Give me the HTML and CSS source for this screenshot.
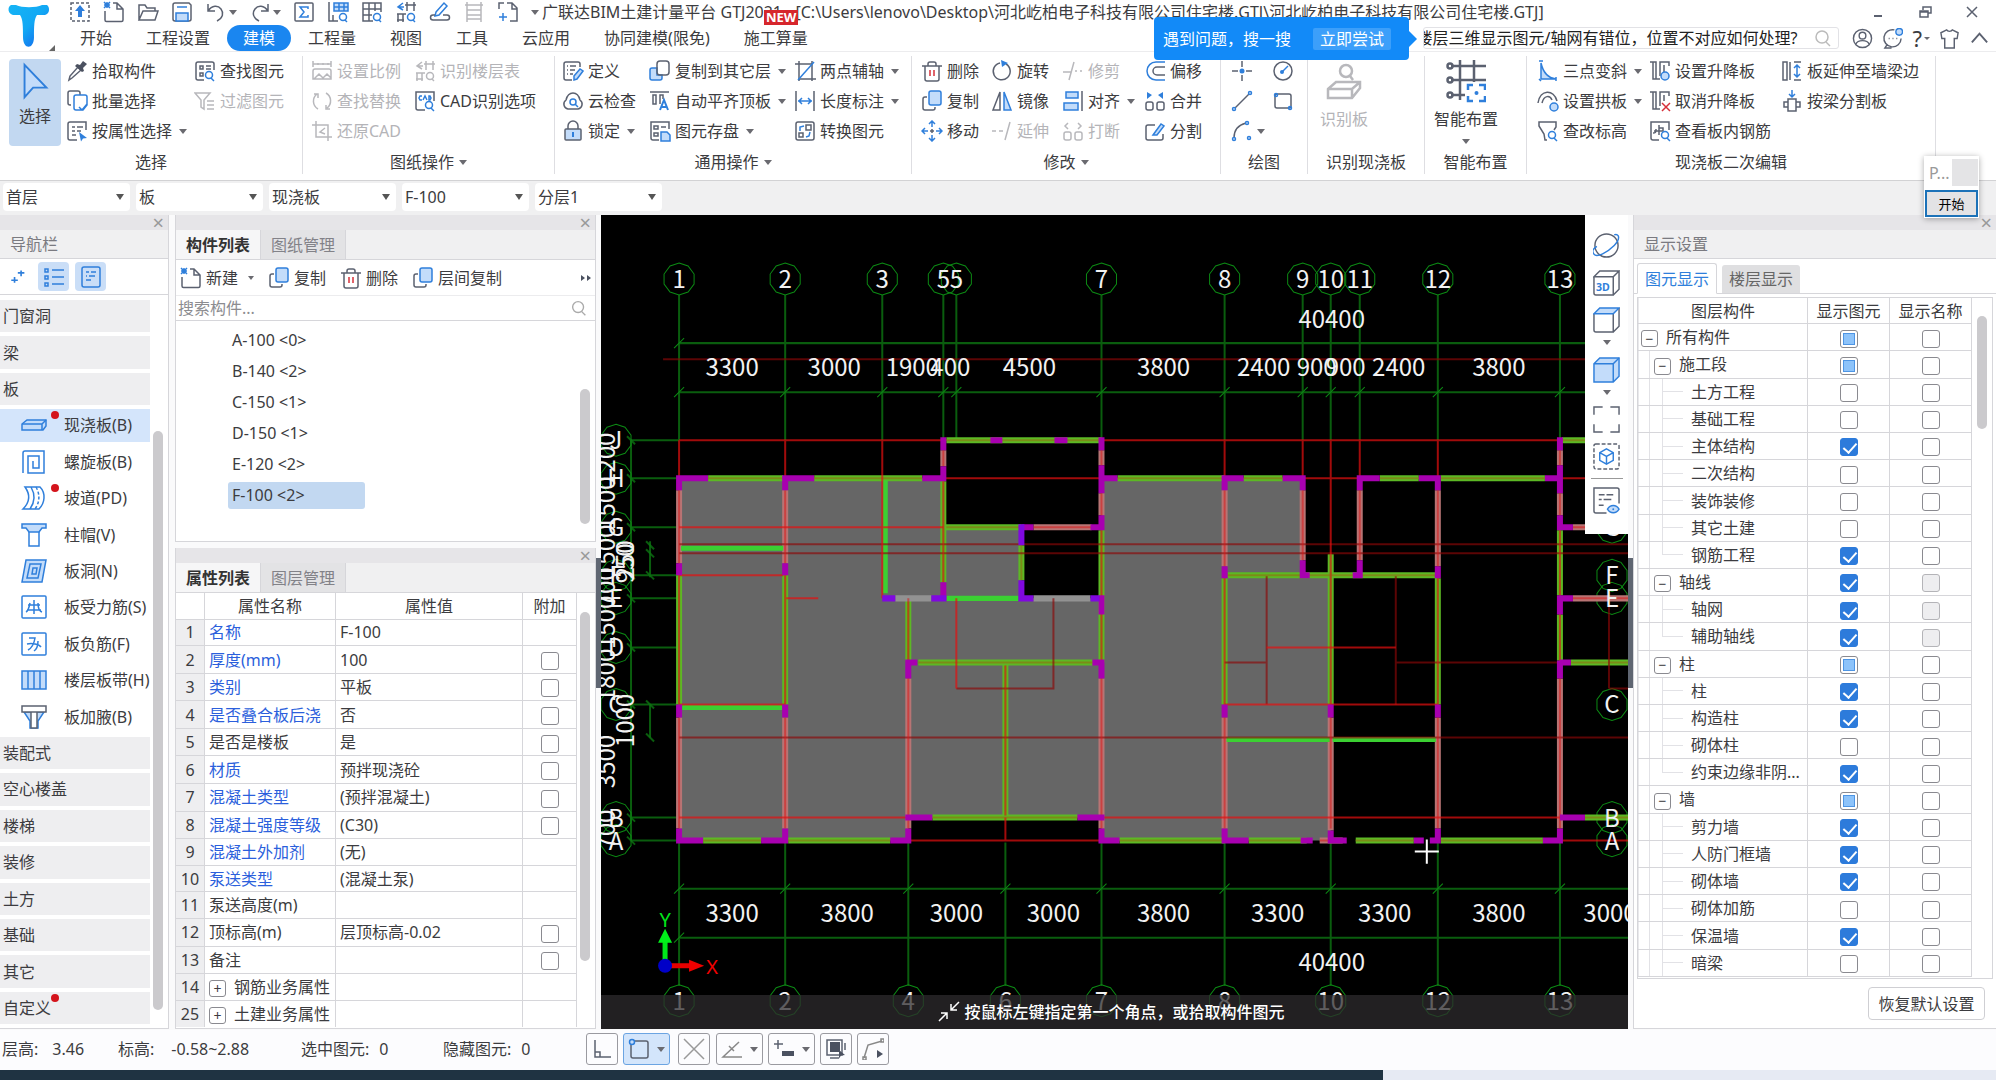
FILE: index.html
```html
<!DOCTYPE html>
<html lang="zh-CN">
<head>
<meta charset="utf-8">
<title>广联达BIM土建计量平台 GTJ2021</title>
<link rel="stylesheet" href="styles.css">
</head>
<body>
<svg class="defs" aria-hidden="true">
<defs>
<linearGradient id="logo" x1="0" y1="0" x2="1" y2="1"><stop offset="0" stop-color="#16b4f5"/><stop offset=".5" stop-color="#12a8f4"/><stop offset="1" stop-color="#1558ea"/></linearGradient>
<symbol id="i-up" viewBox="0 0 22 22"><rect x="2" y="2" width="18" height="18" stroke-dasharray="3 2"/><path class="bf" d="M11 4l5 6h-3v6H9v-6H6z"/></symbol>
<symbol id="i-new" viewBox="0 0 22 22"><path d="M2 10v9a1.500 1.500 0 0 0 1.500 1.500h15A1.500 1.500 0 0 0 20 19V8l-6-6h-4M14 2v6h6"/><path class="b" d="M1 1l6 6M7 1L1 7M4 1v6M1 4h6"/></symbol>
<symbol id="i-open" viewBox="0 0 22 22"><path d="M2 19V4h6l2 3h8v3M2 19l4-9h15l-3 9z"/></symbol>
<symbol id="i-save" viewBox="0 0 22 22"><path d="M2 4a2 2 0 0 1 2-2h14l2 2v14a2 2 0 0 1-2 2H4a2 2 0 0 1-2-2z"/><path class="bl" d="M5 20v-8h12v8z"/><path class="b" d="M6 6h10"/></symbol>
<symbol id="i-undo" viewBox="0 0 22 22"><path d="M3 3v7h7M3 10c4-6 10-6 13-2s2 9-4 12"/></symbol>
<symbol id="i-redo" viewBox="0 0 22 22"><path d="M19 3v7h-7M19 10c-4-6-10-6-13-2s-2 9 4 12"/></symbol>
<symbol id="i-sum" viewBox="0 0 22 22"><rect x="2" y="2" width="18" height="18" rx="1"/><path class="b" d="M15 8V6H7l4 5-4 5h8v-2"/></symbol>
<symbol id="i-find2" viewBox="0 0 22 22"><path d="M2 1v19h9M6 14v6"/><rect class="bl" x="7" y="2" width="14" height="8"/><path class="b" d="M7 6h14M12 2v8M17 2v8"/><circle class="b" cx="16" cy="16" r="3.500"/><path class="b" d="M18 19l2 2"/></symbol>
<symbol id="i-gridq" viewBox="0 0 22 22"><path d="M12 20H2V2h18v9M2 8h18M2 14h9M8 2v18M14 2v8"/><circle class="b" cx="16" cy="16" r="3.500"/><path class="b" d="M18 19l2 2"/></symbol>
<symbol id="i-barq" viewBox="0 0 22 22"><path d="M12 1v9M19 1v9M10 4h11M2 13h9M3 13v8M8 13v8M2 19h7"/><path class="b" d="M8 2L3 6l5 3M3 6h6"/><circle class="b" cx="16" cy="16" r="3.500"/><path class="b" d="M18 19l2 2"/></symbol>
<symbol id="i-edit" viewBox="0 0 22 22"><path class="b" d="M7 11l8-9 3 3-8 9-4 1z"/><path d="M6 14H4a2.500 2.500 0 0 0 0 5h14a2.500 2.500 0 0 0 0-5h-4"/></symbol>
<symbol id="i-ladder" viewBox="0 0 22 22"><path d="M4 1v20M18 1v20M4 4h14M4 9h14M4 14h14M4 18h14M2 4h2M18 4h2"/></symbol>
<symbol id="i-addpage" viewBox="0 0 22 22"><path d="M2 8V2h5M10 2h5l5 5v13h-7M15 2v6h5"/><path class="b" d="M6 12v8M2 16h8"/></symbol>
<symbol id="i-pick" viewBox="0 0 22 22"><path d="M3 20l1-4 8-9 3 3-9 8z"/><path class="kf" d="M11 4l3 1 3-4 4 3-4 4 1 3-2 1-7-6z"/></symbol>
<symbol id="i-batch" viewBox="0 0 22 22"><path d="M5 15H4a2 2 0 0 1-2-2V3a2 2 0 0 1 2-2h8a2 2 0 0 1 2 2v2"/><path class="b" d="M10 5h9a2 2 0 0 1 2 2v8l-4 5h-7a2 2 0 0 1-2-2V7a2 2 0 0 1 2-2zM13 17l3 3 5-6"/></symbol>
<symbol id="i-attr" viewBox="0 0 22 22"><path d="M11 20H4a2 2 0 0 1-2-2V4a2 2 0 0 1 2-2h16v8M6 7h3M11 7h6M6 11h3M11 11h4M6 15h4"/><path class="bf" d="M13 12l8 6-4 .5-2 3z"/></symbol>
<symbol id="i-find" viewBox="0 0 22 22"><path d="M10 20H4a2 2 0 0 1-2-2V4a2 2 0 0 1 2-2h14a2 2 0 0 1 2 2v6M6 6h3v3H6zM6 13h3v3H6zM12 6h5M12 9h5"/><circle class="b" cx="15" cy="15" r="3.500"/><path class="b" d="M17 18l3 3"/></symbol>
<symbol id="i-filter" viewBox="0 0 22 22"><path d="M1 3h15l-6 7v9l-3-2v-7zM13 11h7M13 15h7M13 19h7"/></symbol>
<symbol id="i-scale" viewBox="0 0 22 22"><path d="M2 1v6M20 1v6M2 4h18M7 3v2M12 3v2M17 3v2M4 9h14a2 2 0 0 1 2 2v8H2v-8a2 2 0 0 1 2-2zM3 19l5-5 4 4 4-4 4 4"/></symbol>
<symbol id="i-swap" viewBox="0 0 22 22"><path d="M7 19A9 9 0 0 1 6 4M15 3a9 9 0 0 1 1 15M3 4h4v4M19 19h-4v-4"/></symbol>
<symbol id="i-crop" viewBox="0 0 22 22"><path d="M5 1v16h16M1 5h16v16M14 8l-5 4 5 2M17 12v4"/></symbol>
<symbol id="i-cad" viewBox="0 0 22 22"><path d="M11 20H4a2 2 0 0 1-2-2V2h18v9"/><path class="b" d="M8 6H6L5 8l1 2h2M9 10l2-4 2 4M15 6v4h1l1-2-1-2z"/><circle class="b" cx="15" cy="15" r="3.500"/><path class="b" d="M17 18l3 3"/></symbol>
<symbol id="i-define" viewBox="0 0 22 22"><path d="M10 20H4a2 2 0 0 1-2-2V4a2 2 0 0 1 2-2h12a2 2 0 0 1 2 2v3M5 6h1M8 6h6M5 10h1M8 10h5M5 14h1M8 14h3"/><path class="bl" d="M12 16l6-7 3 2-6 8-3 1z"/></symbol>
<symbol id="i-cloud" viewBox="0 0 22 22"><path d="M6 19a5 5 0 0 1-2-9c1-4 3-7 7-7s6 3 7 7a5 5 0 0 1-2 9z"/><circle class="b" cx="11" cy="12" r="3"/><path class="b" d="M13 14l3 3"/></symbol>
<symbol id="i-lock" viewBox="0 0 22 22"><path d="M6 9V6a5 5 0 0 1 10 0v3"/><rect class="fl" x="3" y="9" width="16" height="11" rx="1"/><path class="b" stroke-width="2" d="M11 12v5"/></symbol>
<symbol id="i-copy" viewBox="0 0 22 22"><path d="M6 7H4a2 2 0 0 0-2 2v9a2 2 0 0 0 2 2h8a2 2 0 0 0 2-2v-1"/><rect class="bl" x="8" y="1" width="12" height="14" rx="2"/></symbol>
<symbol id="i-copyto" viewBox="0 0 22 22"><path class="bl" d="M8 8H3a2 2 0 0 0-2 2v8a2 2 0 0 0 2 2h8a2 2 0 0 0 2-2v-3H8z"/><rect x="8" y="1" width="12" height="14" rx="3"/></symbol>
<symbol id="i-align" viewBox="0 0 22 22"><path d="M1 2h19M4 5h3v9H4zM11 14V5h3v4"/><path class="b" stroke-width="2" d="M11 20l4-10 4 10M13 17h4"/></symbol>
<symbol id="i-store" viewBox="0 0 22 22"><path d="M10 20H4a2 2 0 0 1-2-2V2h18v7M5 6h4v3H5zM5 13h4v3H5zM12 7h5"/><path class="bl" d="M12 12h6l3 3v6h-9z"/></symbol>
<symbol id="i-twopt" viewBox="0 0 22 22"><path d="M5 1v20M18 1v20M1 4h17M5 19h17"/><path class="b" d="M4 20L20 2"/></symbol>
<symbol id="i-dim" viewBox="0 0 22 22"><path d="M2 1v20M20 1v20"/><path class="b" d="M4 11h14M8 8l-3 3 3 3M14 8l3 3-3 3"/></symbol>
<symbol id="i-conv" viewBox="0 0 22 22"><rect x="2" y="2" width="18" height="18" rx="2"/><path d="M12 5h5v5h-5zM5 13h4v4H5z"/><path class="b" d="M10 6L6 7v4M16 12l-1 4-3 1"/></symbol>
<symbol id="i-del" viewBox="0 0 22 22"><path d="M1 6h20M4 6v13a2 2 0 0 0 2 2h10a2 2 0 0 0 2-2V6M7 6V4a2 2 0 0 1 2-2h4a2 2 0 0 1 2 2v2"/><path class="r" d="M9 10v6M13 10v6"/></symbol>
<symbol id="i-move" viewBox="0 0 22 22"><path class="b" d="M11 1v6M11 15v6M1 11h6M15 11h6M8 4l3-3 3 3M8 18l3 3 3-3M4 8l-3 3 3 3M18 8l3 3-3 3"/><path d="M9 11h4M11 9v4"/></symbol>
<symbol id="i-rot" viewBox="0 0 22 22"><path d="M15 4a8.500 8.500 0 1 1-6-1"/><path class="bf" d="M10 0l7 3-6 4z"/></symbol>
<symbol id="i-mirror" viewBox="0 0 22 22"><path d="M9 2v18H2z"/><path class="bl" d="M13 2v18h7z"/></symbol>
<symbol id="i-extend" viewBox="0 0 22 22"><path d="M1 11h4M8 11h4M19 2l-5 18"/></symbol>
<symbol id="i-trim" viewBox="0 0 22 22"><path d="M1 12h8M13 11h2M18 11h2M12 2L7 20"/></symbol>
<symbol id="i-al" viewBox="0 0 22 22"><rect class="bl" x="4" y="2" width="12" height="6"/><rect class="bl" x="2" y="13" width="14" height="7"/><path d="M20 1v20"/></symbol>
<symbol id="i-break" viewBox="0 0 22 22"><rect x="2" y="12" width="7" height="8" rx="2"/><rect x="13" y="12" width="7" height="8" rx="2"/><path d="M6 3L3 6l3 3M16 3l3 3-3 3"/></symbol>
<symbol id="i-offset" viewBox="0 0 22 22"><path class="b" d="M21 2h-9a9 9 0 0 0 0 18h9"/><path d="M21 7h-8a4 4 0 0 0 0 8h8"/></symbol>
<symbol id="i-merge" viewBox="0 0 22 22"><rect x="2" y="12" width="7" height="8" rx="2"/><rect x="13" y="12" width="7" height="8" rx="2"/><path class="bf" d="M3 2l5 3-5 4zM19 2l-5 3 5 4z"/></symbol>
<symbol id="i-split" viewBox="0 0 22 22"><path d="M11 5H4a2 2 0 0 0-2 2v11a2 2 0 0 0 2 2h13a2 2 0 0 0 2-2v-4"/><path class="bl" d="M9 15l8-11 3 2-7 9z"/></symbol>
<symbol id="i-pt" viewBox="0 0 22 22"><path d="M11 1v6M11 15v6M1 11h6M15 11h6"/><circle class="bf" cx="11" cy="11" r="2.500"/></symbol>
<symbol id="i-line" viewBox="0 0 22 22"><path d="M4 18L18 4"/><circle class="b" cx="19" cy="3" r="1.500"/><circle class="b" cx="3" cy="19" r="1.500"/></symbol>
<symbol id="i-arc" viewBox="0 0 22 22"><path d="M3 18c0-8 4-13 12-15"/><circle class="b" cx="16" cy="3" r="1.500"/><circle class="b" cx="3" cy="19" r="1.500"/><circle class="b" cx="18" cy="18" r="1.500"/></symbol>
<symbol id="i-circ" viewBox="0 0 22 22"><circle cx="11" cy="11" r="9"/><path class="b" d="M10 12l6-6"/><circle class="bf" cx="10" cy="12" r="2"/></symbol>
<symbol id="i-rect" viewBox="0 0 22 22"><rect x="3" y="4" width="16" height="14" rx="2"/><circle class="b" cx="4" cy="5" r="1.500"/><circle class="b" cx="18" cy="18" r="1.500"/></symbol>
<symbol id="i-recog" viewBox="0 0 40 40"><g stroke-width="2.500"><circle cx="22" cy="8" r="6"/><path d="M26 13l3 4M4 26l8-7h24v6l-8 10H4zM4 26h24l8-7M28 26v9"/></g></symbol>
<symbol id="i-smart" viewBox="0 0 40 44"><g stroke-width="2.500"><path d="M5 7h35M5 21h35M5 36h14M14 1v40M28 1v22"/><circle cx="4" cy="7" r="2.500"/><circle cx="4" cy="21" r="2.500"/><circle cx="4" cy="36" r="2.500"/></g><path class="b" stroke-width="2.500" d="M22 31v-5h5M33 26h6v5M39 37v5h-6M27 42h-5v-5"/><circle class="bf" cx="30.500" cy="34" r="2"/></symbol>
<symbol id="i-slope" viewBox="0 0 22 22"><path class="bl" d="M4 3v16h15C11 18 6 12 4 3z"/><path class="b" d="M2 1h4M2 19l2 2M19 17v4"/></symbol>
<symbol id="i-arch" viewBox="0 0 22 22"><path d="M1 13C3-1 17-1 20 11M5 13c2-8 8-8 10-3"/><circle class="bl" cx="17" cy="17" r="4"/></symbol>
<symbol id="i-chkh" viewBox="0 0 22 22"><path d="M10 20H8L7 14 2 6V2h17v5l-2 3"/><circle class="b" cx="15" cy="15" r="3.500"/><path class="b" d="M17 18l3 3"/></symbol>
<symbol id="i-lift" viewBox="0 0 22 22"><path d="M1 2h6v17h4M4 2v17h3M11 16V2h9v4M15 5v7"/><circle class="bl" cx="16" cy="16" r="4"/></symbol>
<symbol id="i-unlift" viewBox="0 0 22 22"><path d="M1 2h6v17h4M4 2v17h3M11 16V2h9v4M15 5v6"/><path class="r" d="M13 13l8 8M21 13l-8 8"/></symbol>
<symbol id="i-rebar" viewBox="0 0 22 22"><path d="M10 20H4a2 2 0 0 1-2-2V2h18v8M10 5v10M7 9c0 4-1 4-3 4M10 8h4v3M5 11h9"/><circle class="b" cx="16" cy="15" r="3.500"/><path class="b" d="M18 18l3 3"/></symbol>
<symbol id="i-ext" viewBox="0 0 22 22"><path d="M2 2h4v18H2zM9 2v18M13 2h7M13 20h7"/><path class="b" d="M16 5v12M13 8l3-3 3 3M13 14l3 3 3-3"/></symbol>
<symbol id="i-beam" viewBox="0 0 22 22"><path d="M7 9h8v12H7zM7 12H3v5h4M15 12h4v5h-4"/><path class="b" d="M11 0v7M8 4l3 3 3-3"/></symbol>
<symbol id="i-mag" viewBox="0 0 22 22"><circle cx="10" cy="10" r="6"/><path d="M14 15l4 4"/></symbol>
<symbol id="i-user" viewBox="0 0 22 22"><circle cx="11" cy="11" r="9.500"/><circle cx="11" cy="8" r="3.500"/><path d="M4 17c2-5 12-5 14 0"/></symbol>
<symbol id="i-chat" viewBox="0 0 22 22"><path d="M13 2a9 9 0 1 0 7 9M5 18l-2 3h7M7 11h1M11 11h1M15 11h1"/><circle class="bl" cx="18" cy="4" r="3.500"/></symbol>
<symbol id="i-shirt" viewBox="0 0 22 22"><path d="M8 2c1 2 5 2 6 0l6 3-1 6h-3v10H6V11H3L2 5z"/></symbol>
<symbol id="i-slab" viewBox="0 0 26 24"><path class="fl b" d="M1 11l5-4h19v6l-3 4H1z"/><path class="b" d="M1 11h20l4-4M21 11v6"/></symbol>
<symbol id="i-spiral" viewBox="0 0 26 24"><path class="b" d="M2 23V3a2 2 0 0 1 2-2h19v22H7V6h11v12h-6v-7"/></symbol>
<symbol id="i-ramp" viewBox="0 0 26 24"><path class="b" d="M4 1h15c6 6 5 16-1 22H2C9 16 9 8 4 1zM10 1c4 7 4 15-1 22"/><path class="b" stroke-dasharray="3 2" d="M15 1c4 7 4 15-1 22"/></symbol>
<symbol id="i-cap" viewBox="0 0 26 24"><path class="bl" d="M1 1h24v4h-4l-3 4H8L5 5H1z"/><path class="b" d="M8 9v14h10V9"/></symbol>
<symbol id="i-hole" viewBox="0 0 26 24"><path class="bl" d="M5 1h20l-4 22H1zM9 5h11l-3 14H6zM12 9h4l-1 6h-4z"/></symbol>
<symbol id="i-bar1" viewBox="0 0 26 24"><rect class="b" x="1" y="1" width="24" height="22" rx="1"/><path class="b" d="M13 5v14M7 10h12M6 15h14M9 8c-1 5-2 8-4 9M17 8c0 5 1 8 4 9"/></symbol>
<symbol id="i-bar2" viewBox="0 0 26 24"><rect class="b" x="1" y="1" width="24" height="22" rx="1"/><path class="b" d="M8 6h6c-1 6-3 10-7 12M6 12c5-1 12 0 14 3M17 9c0 5-1 8-4 10"/></symbol>
<symbol id="i-band" viewBox="0 0 26 24"><path class="bl" d="M1 3h24v18H1zM7 3v18M13 3v18M19 3v18"/></symbol>
<symbol id="i-haunch" viewBox="0 0 26 24"><path class="bl" d="M3 7h20l-6 9v7H9v-7z"/><path fill="#fff" d="M1 1h24v6H1zM10 7h6v16h-6z"/></symbol>
</defs>
</svg>

<header class="top">
  <div class="logo"><svg viewBox="0 0 60 52"><path fill="url(#logo)" d="M11 5h5c6 3 20 3 26 0h5c3 2 3 9-2 10h-8c-3 4-3 12-3 22 0 13-11 13-11 0 0-10 0-18-3-22h-7c-5-1-6-8-2-10z"/><path fill="#666" d="M55 45v6h-6z"/></svg></div>
  <div class="top-main">
    <div class="titlebar">
      <div class="quick">
        <button aria-label="上传"><svg><use href="#i-up"/></svg></button>
        <button aria-label="新建"><svg><use href="#i-new"/></svg></button>
        <button aria-label="打开"><svg><use href="#i-open"/></svg></button>
        <button aria-label="保存"><svg><use href="#i-save"/></svg></button>
        <button aria-label="撤销"><svg><use href="#i-undo"/></svg><i class="tri"></i></button>
        <button aria-label="恢复"><svg><use href="#i-redo"/></svg><i class="tri"></i></button>
        <button aria-label="汇总"><svg><use href="#i-sum"/></svg></button>
        <button aria-label="查看工程量"><svg><use href="#i-find2"/></svg></button>
        <button aria-label="查看报表"><svg><use href="#i-gridq"/></svg></button>
        <button aria-label="查看钢筋"><svg><use href="#i-barq"/></svg></button>
        <button aria-label="编辑"><svg><use href="#i-edit"/></svg></button>
        <button aria-label="钢筋三维" disabled><svg><use href="#i-ladder"/></svg></button>
        <button aria-label="添加"><svg><use href="#i-addpage"/></svg></button>
        <button aria-label="更多"><i class="tri more"></i></button>
      </div>
      <div class="doc-title">广联达BIM土建计量平台 GTJ2021 - [C:\Users\lenovo\Desktop\河北屹柏电子科技有限公司住宅楼.GTJ\河北屹柏电子科技有限公司住宅楼.GTJ]<span class="new">NEW</span></div>
      <div class="winbtns">
        <button aria-label="最小化"><svg viewBox="0 0 16 16"><path stroke-width="2" d="M4 12h8"/></svg></button>
        <button aria-label="还原"><svg viewBox="0 0 16 16"><path d="M6 6V3h8v6h-3M3 7h8v6H3zM3 8h8"/></svg></button>
        <button aria-label="关闭"><svg viewBox="0 0 16 16"><path d="M3 3l10 10M13 3L3 13"/></svg></button>
      </div>
    </div>
    <div class="menurow">
      <nav class="menu">
        <a href="#">开始</a><a href="#">工程设置</a><a href="#" class="on">建模</a><a href="#">工程量</a><a href="#">视图</a><a href="#">工具</a><a href="#">云应用</a><a href="#">协同建模(限免)</a><a href="#">施工算量</a>
      </nav>
      <div class="help">
        <div class="tip"><span>遇到问题，搜一搜</span><button>立即尝试</button></div>
        <label class="ask"><input type="text" aria-label="搜索问题" value="楼层三维显示图元/轴网有错位，位置不对应如何处理?"><svg><use href="#i-mag"/></svg></label>
        <button aria-label="用户"><svg><use href="#i-user"/></svg></button>
        <button aria-label="消息"><svg><use href="#i-chat"/></svg></button>
        <button aria-label="帮助" class="q">?<i class="tri"></i></button>
        <button aria-label="皮肤"><svg><use href="#i-shirt"/></svg></button>
        <button aria-label="收起"><svg viewBox="0 0 22 22"><path stroke-width="2" d="M3 15l8-9 8 9"/></svg></button>
      </div>
    </div>
  </div>
</header>

<section class="ribbon">
  <div class="grp g1">
    <div class="tools">
      <button class="big sel"><svg viewBox="0 0 28 40"><path class="bl" stroke-width="2" d="M3 3v34l9-10h14z"/></svg>选择</button>
      <button><svg><use href="#i-pick"/></svg>拾取构件</button><button><svg><use href="#i-find"/></svg>查找图元</button>
      <button><svg><use href="#i-batch"/></svg>批量选择</button><button disabled><svg><use href="#i-filter"/></svg>过滤图元</button>
      <button><svg><use href="#i-attr"/></svg>按属性选择<i class="tri"></i></button>
    </div>
    <div class="cap">选择</div>
  </div>
  <div class="grp g2">
    <div class="tools">
      <button disabled><svg><use href="#i-scale"/></svg>设置比例</button><button disabled><svg><use href="#i-barq"/></svg>识别楼层表</button>
      <button disabled><svg><use href="#i-swap"/></svg>查找替换</button><button><svg><use href="#i-cad"/></svg>CAD识别选项</button>
      <button disabled><svg><use href="#i-crop"/></svg>还原CAD</button>
    </div>
    <div class="cap">图纸操作<i class="tri"></i></div>
  </div>
  <div class="grp g3">
    <div class="tools">
      <button><svg><use href="#i-define"/></svg>定义</button><button><svg><use href="#i-copyto"/></svg>复制到其它层<i class="tri"></i></button><button><svg><use href="#i-twopt"/></svg>两点辅轴<i class="tri"></i></button>
      <button><svg><use href="#i-cloud"/></svg>云检查</button><button><svg><use href="#i-align"/></svg>自动平齐顶板<i class="tri"></i></button><button><svg><use href="#i-dim"/></svg>长度标注<i class="tri"></i></button>
      <button><svg><use href="#i-lock"/></svg>锁定<i class="tri"></i></button><button><svg><use href="#i-store"/></svg>图元存盘<i class="tri"></i></button><button><svg><use href="#i-conv"/></svg>转换图元</button>
    </div>
    <div class="cap">通用操作<i class="tri"></i></div>
  </div>
  <div class="grp g4">
    <div class="tools">
      <button><svg><use href="#i-del"/></svg>删除</button><button><svg><use href="#i-rot"/></svg>旋转</button><button disabled><svg><use href="#i-trim"/></svg>修剪</button><button><svg><use href="#i-offset"/></svg>偏移</button>
      <button><svg><use href="#i-copy"/></svg>复制</button><button><svg><use href="#i-mirror"/></svg>镜像</button><button><svg><use href="#i-al"/></svg>对齐<i class="tri"></i></button><button><svg><use href="#i-merge"/></svg>合并</button>
      <button><svg><use href="#i-move"/></svg>移动</button><button disabled><svg><use href="#i-extend"/></svg>延伸</button><button disabled><svg><use href="#i-break"/></svg>打断</button><button><svg><use href="#i-split"/></svg>分割</button>
    </div>
    <div class="cap">修改<i class="tri"></i></div>
  </div>
  <div class="grp g5">
    <div class="tools">
      <button aria-label="点"><svg><use href="#i-pt"/></svg></button><button aria-label="圆"><svg><use href="#i-circ"/></svg></button>
      <button aria-label="直线"><svg><use href="#i-line"/></svg></button><button aria-label="矩形"><svg><use href="#i-rect"/></svg></button>
      <button aria-label="弧"><svg><use href="#i-arc"/></svg><i class="tri"></i></button>
    </div>
    <div class="cap">绘图</div>
  </div>
  <div class="grp g6">
    <div class="tools"><button class="big" disabled><svg><use href="#i-recog"/></svg>识别板</button></div>
    <div class="cap">识别现浇板</div>
  </div>
  <div class="grp g7">
    <div class="tools"><button class="big"><svg><use href="#i-smart"/></svg>智能布置<i class="tri"></i></button></div>
    <div class="cap">智能布置</div>
  </div>
  <div class="grp g8">
    <div class="tools">
      <button><svg><use href="#i-slope"/></svg>三点变斜<i class="tri"></i></button><button><svg><use href="#i-lift"/></svg>设置升降板</button><button><svg><use href="#i-ext"/></svg>板延伸至墙梁边</button>
      <button><svg><use href="#i-arch"/></svg>设置拱板<i class="tri"></i></button><button><svg><use href="#i-unlift"/></svg>取消升降板</button><button><svg><use href="#i-beam"/></svg>按梁分割板</button>
      <button><svg><use href="#i-chkh"/></svg>查改标高</button><button><svg><use href="#i-rebar"/></svg>查看板内钢筋</button>
    </div>
    <div class="cap">现浇板二次编辑</div>
  </div>
  <div class="recorder"><div class="rec-head"><span>P...</span><i></i></div><button>开始</button></div>
</section>

<div class="selectors">
  <select aria-label="楼层"><option>首层</option></select>
  <select aria-label="构件类别"><option>板</option></select>
  <select aria-label="构件类型"><option>现浇板</option></select>
  <select aria-label="构件"><option>F-100</option></select>
  <select aria-label="分层"><option>分层1</option></select>
</div>

<main class="work">
  <aside class="panel nav">
    <div class="strip"><button aria-label="关闭">×</button></div>
    <h2>导航栏</h2>
    <div class="navtools">
      <button aria-label="添加"><svg viewBox="0 0 22 22"><path class="b" stroke-width="2" d="M16 3v7M12 6h8M8 11v7M4 15h8"/></svg></button>
      <button aria-label="列表" class="on"><svg viewBox="0 0 22 22"><path class="b" d="M2 3h3v3H2zM2 10h3v3H2zM2 17h3v3H2zM9 4h12M9 11h12M9 18h12"/></svg></button>
      <button aria-label="详细" class="on"><svg viewBox="0 0 22 22"><rect class="b" x="2" y="1" width="18" height="20" rx="2"/><path class="b" d="M6 6h3M11 6h5M6 10h1M9 10h6M6 14h5"/></svg></button>
    </div>
    <div class="navbody">
      <ul>
        <li>门窗洞</li><li>梁</li><li>板</li>
        <li class="sub on"><svg><use href="#i-slab"/></svg><b class="dot"></b>现浇板(B)</li>
        <li class="sub"><svg><use href="#i-spiral"/></svg>螺旋板(B)</li>
        <li class="sub"><svg><use href="#i-ramp"/></svg><b class="dot"></b>坡道(PD)</li>
        <li class="sub"><svg><use href="#i-cap"/></svg>柱帽(V)</li>
        <li class="sub"><svg><use href="#i-hole"/></svg>板洞(N)</li>
        <li class="sub"><svg><use href="#i-bar1"/></svg>板受力筋(S)</li>
        <li class="sub"><svg><use href="#i-bar2"/></svg>板负筋(F)</li>
        <li class="sub"><svg><use href="#i-band"/></svg>楼层板带(H)</li>
        <li class="sub"><svg><use href="#i-haunch"/></svg>板加腋(B)</li>
        <li>装配式</li><li>空心楼盖</li><li>楼梯</li><li>装修</li><li>土方</li><li>基础</li><li>其它</li><li>自定义<b class="dot"></b></li>
      </ul>
      <div class="scroll"><i></i></div>
    </div>
  </aside>

  <div class="mid">
    <section class="panel comps">
      <div class="strip"><button aria-label="关闭">×</button></div>
      <div class="tabs"><button class="on">构件列表</button><button>图纸管理</button></div>
      <div class="ctools">
        <button><svg><use href="#i-new"/></svg>新建<i class="tri"></i></button>
        <button><svg><use href="#i-copy"/></svg>复制</button>
        <button><svg><use href="#i-del"/></svg>删除</button>
        <button><svg><use href="#i-copy"/></svg>层间复制</button>
        <button class="last" aria-label="更多"><svg viewBox="0 0 12 12"><path class="kf" d="M1 3l4 3-4 3zM7 3l4 3-4 3z"/></svg></button>
      </div>
      <label class="csearch"><input type="text" placeholder="搜索构件..." aria-label="搜索构件"><svg><use href="#i-mag"/></svg></label>
      <div class="clist">
        <ul><li>A-100 &lt;0&gt;</li><li>B-140 &lt;2&gt;</li><li>C-150 &lt;1&gt;</li><li>D-150 &lt;1&gt;</li><li>E-120 &lt;2&gt;</li><li class="on">F-100 &lt;2&gt;</li></ul>
        <div class="scroll"><i></i></div>
      </div>
    </section>
    <section class="panel props">
      <div class="strip"><button aria-label="关闭">×</button></div>
      <div class="tabs"><button class="on">属性列表</button><button>图层管理</button></div>
      <div class="pbody">
        <table>
          <colgroup><col class="c1"><col class="c2"><col class="c3"><col class="c4"></colgroup>
          <tr><th></th><th>属性名称</th><th>属性值</th><th>附加</th></tr>
          <tr><th>1</th><td class="l">名称</td><td>F-100</td><td></td></tr>
          <tr><th>2</th><td class="l">厚度(mm)</td><td>100</td><td><input type="checkbox" aria-label="厚度附加"></td></tr>
          <tr><th>3</th><td class="l">类别</td><td>平板</td><td><input type="checkbox" aria-label="类别附加"></td></tr>
          <tr><th>4</th><td class="l">是否叠合板后浇</td><td>否</td><td><input type="checkbox" aria-label="叠合板附加"></td></tr>
          <tr><th>5</th><td>是否是楼板</td><td>是</td><td><input type="checkbox" aria-label="楼板附加"></td></tr>
          <tr><th>6</th><td class="l">材质</td><td>预拌现浇砼</td><td><input type="checkbox" aria-label="材质附加"></td></tr>
          <tr><th>7</th><td class="l">混凝土类型</td><td>(预拌混凝土)</td><td><input type="checkbox" aria-label="混凝土类型附加"></td></tr>
          <tr><th>8</th><td class="l">混凝土强度等级</td><td>(C30)</td><td><input type="checkbox" aria-label="强度等级附加"></td></tr>
          <tr><th>9</th><td class="l">混凝土外加剂</td><td>(无)</td><td></td></tr>
          <tr><th>10</th><td class="l">泵送类型</td><td>(混凝土泵)</td><td></td></tr>
          <tr><th>11</th><td>泵送高度(m)</td><td></td><td></td></tr>
          <tr><th>12</th><td>顶标高(m)</td><td>层顶标高-0.02</td><td><input type="checkbox" aria-label="顶标高附加"></td></tr>
          <tr><th>13</th><td>备注</td><td></td><td><input type="checkbox" aria-label="备注附加"></td></tr>
          <tr><th>14</th><td><button class="exp" aria-label="展开">+</button>钢筋业务属性</td><td></td><td></td></tr>
          <tr><th>25</th><td><button class="exp" aria-label="展开">+</button>土建业务属性</td><td></td><td></td></tr>
        </table>
        <div class="scroll"><i></i></div>
      </div>
    </section>
  </div>

  <div class="split left"></div>
  <section class="canvas">
    <svg class="plan" viewBox="602 215 1026 815" preserveAspectRatio="xMinYMin slice">
      <defs>
        <polygon id="bub" points="0,-16 9,-13 15,-5 15,5 9,13 0,16 -9,13 -15,5 -15,-5 -9,-13"/>
        <path id="tk" d="M-5 5L5-5"/>
      </defs>
      <path class="slab" d="M680 478H944V527H1022V598H1102V478H1303V575H1331V840H1102V817H909V840H680z"/>
      <g class="grid">
        <path d="M680 295V440M786 295V440M883 295V440M944 295V440M957 295V440M1102 295V440M1225 295V440M1303 295V440M1331 295V440M1360 295V440M1438 295V440M1560 295V440M680 343H1628M680 392H1628M680 888H1628M680 937H1628M680 842V985M786 842V985M909 842V985M1006 842V985M1102 842V985M1225 842V985M1331 842V985M1438 842V985M1560 842V985M632 440V840M632 440H680M632 478H680M632 527H680M632 575H680M632 598H680M632 647H680M632 704H680M632 817H680M632 840H680M651 541V577M651 704V737"/>
        <use href="#bub" x="680" y="279"/><use href="#bub" x="786" y="279"/><use href="#bub" x="883" y="279"/><use href="#bub" x="944" y="279"/><use href="#bub" x="957" y="279"/><use href="#bub" x="1102" y="279"/><use href="#bub" x="1225" y="279"/><use href="#bub" x="1303" y="279"/><use href="#bub" x="1331" y="279"/><use href="#bub" x="1360" y="279"/><use href="#bub" x="1438" y="279"/><use href="#bub" x="1560" y="279"/>
        <use href="#bub" x="680" y="1000"/><use href="#bub" x="786" y="1000"/><use href="#bub" x="909" y="1000"/><use href="#bub" x="1006" y="1000"/><use href="#bub" x="1102" y="1000"/><use href="#bub" x="1225" y="1000"/><use href="#bub" x="1331" y="1000"/><use href="#bub" x="1438" y="1000"/><use href="#bub" x="1560" y="1000"/>
        <use href="#bub" x="617" y="440"/><use href="#bub" x="617" y="478"/><use href="#bub" x="617" y="527"/><use href="#bub" x="617" y="575"/><use href="#bub" x="617" y="598"/><use href="#bub" x="617" y="647"/><use href="#bub" x="617" y="704"/><use href="#bub" x="617" y="817"/><use href="#bub" x="617" y="840"/>
        <use href="#bub" x="1612" y="527"/><use href="#bub" x="1612" y="575"/><use href="#bub" x="1612" y="598"/><use href="#bub" x="1612" y="704"/><use href="#bub" x="1612" y="817"/><use href="#bub" x="1612" y="840"/>
        <use href="#tk" x="680" y="343"/><use href="#tk" x="680" y="392"/><use href="#tk" x="786" y="392"/><use href="#tk" x="883" y="392"/><use href="#tk" x="944" y="392"/><use href="#tk" x="957" y="392"/><use href="#tk" x="1102" y="392"/><use href="#tk" x="1225" y="392"/><use href="#tk" x="1303" y="392"/><use href="#tk" x="1331" y="392"/><use href="#tk" x="1360" y="392"/><use href="#tk" x="1438" y="392"/><use href="#tk" x="1560" y="392"/>
        <use href="#tk" x="680" y="888"/><use href="#tk" x="786" y="888"/><use href="#tk" x="909" y="888"/><use href="#tk" x="1006" y="888"/><use href="#tk" x="1102" y="888"/><use href="#tk" x="1225" y="888"/><use href="#tk" x="1331" y="888"/><use href="#tk" x="1438" y="888"/><use href="#tk" x="1560" y="888"/><use href="#tk" x="680" y="937"/>
        <path d="M628 436l8 8M628 474l8 8M628 523l8 8M628 571l8 8M628 594l8 8M628 643l8 8M628 700l8 8M628 813l8 8M628 836l8 8M647 541l8 8M647 549l8 8M647 571l8 8M647 700l8 8M647 733l8 8"/>
      </g>
      <path class="olive" d="M709 478H784M815 478H923M1118 478H1225M1244 478H1283M1380 478H1419M1441 478H1545M947 440H1102M1562 440H1628M947 527H1022M1228 575H1438M919 662H1093M1571 662H1628M933 817H1078M1585 817H1628M704 840H762M789 840H891M1120 840H1225M1249 840H1307M1356 840H1414M1441 840H1543M680 575V704M786 575V704M944 481V582M909 598V660M1006 665V815M1102 530V662M1022 545V580M1225 578V704M1331 554V704M1438 578V704M1560 530V595M1560 614V660"/>
      <path class="olive-core" d="M709 478H784M815 478H923M1118 478H1225M1244 478H1283M1380 478H1419M1441 478H1545M947 440H1102M1562 440H1628M947 527H1022M1228 575H1438M919 662H1093M1571 662H1628M933 817H1078M1585 817H1628M704 840H762M789 840H891M1120 840H1225M1249 840H1307M1356 840H1414M1441 840H1543M680 575V704M786 575V704M944 481V582M909 598V660M1006 665V815M1102 530V662M1022 545V580M1225 578V704M1331 554V704M1438 578V704M1560 530V595M1560 614V660"/>
      <path class="pink" d="M680 490V563M680 717V828M786 490V563M786 717V828M944 450V466M1102 450V465M1102 493V515M1102 678V828M909 678V828M1225 490V566M1225 717V828M1303 490V560M1360 490V560M1438 490V566M1438 717V828M1331 717V830M1560 450V465M1560 493V515M1560 678V828M1034 527H1092M1573 527H1628M1573 598H1628M1320 840H1343"/>
      <path class="lime" d="M886 480V593M682 548H784M683 707H783M947 598H1019M1227 739H1330M1333 739H1436"/>
      <path class="gray" d="M896 598H932M1034 598H1091"/>
      <path class="dred" d="M664 359H1628M680 544H1628M680 553H1628M680 737H1628M1054 598V688M957 688H1055M1267 576V704M1396 576V704M1225 662H1267M1396 662H1560M1609 600V688M1609 688H1628"/>
      <path class="red" d="M680 440H944M1102 440H1560M680 440V478M786 440V478M883 440V598M1225 440V478M1303 440V478M1360 440V478M1438 440V478M1331 440V554M944 478H1102M1303 478H1360M1560 478H1628M680 527H944M680 575H784M787 598H819M680 704H786M1225 704H1438M680 817H909M1102 817H1560M909 840H1102M1560 840H1628M957 598V688M1267 647H1396M1006 817V840"/>
      <path class="core" d="M680 490V704M680 717V828M786 490V704M786 717V828M909 598V828M1102 450V828M1225 490V828M1303 490V560M1331 554V828M1360 490V560M1438 490V828M1560 450V828M944 450V466M944 481V582M1006 665V815M1034 527H1092M1573 527H1628M1573 598H1628M1320 840H1343"/>
      <path class="purple" d="M677 478H709M783 478H815M923 478H947M1102 478H1118M1225 478H1244M1283 478H1306M1357 478H1380M1419 478H1441M1545 478H1563M680 475V490M680 563V575M680 704V717M680 828V843M786 475V490M786 563V575M786 704V717M786 828V843M677 840H704M762 840H789M891 840H912M1100 840H1120M1222 840H1249M1301 840H1313M1334 840H1347M1414 840H1424M1430 840H1441M1543 840H1563M944 437V450M944 466V481M944 582V600M1102 437V450M1102 465V493M1102 515V530M1102 595V614M1102 660V678M1102 828V843M991 440H1003M1055 440H1068M1225 475V490M1225 566V578M1225 704V717M1225 828V843M1303 475V490M1303 560V578M1301 575H1310M1353 575H1363M1360 475V490M1360 560V578M1438 475V490M1438 566V578M1438 704V717M1438 828V843M1331 704V717M1331 830V843M1560 437V450M1560 465V493M1560 515V530M1560 595V614M1560 660V678M1560 828V843M1091 527H1105M1022 527H1034M1560 527H1573M1560 598H1573M906 662H918M1093 662H1105M1560 662H1571M906 817H933M1078 817H1105M1560 817H1585M909 660V678M909 828V843"/>
      <path class="violet" d="M1022 524V545M1022 580V601M883 598H896M932 598H947M1020 598H1034M1091 598H1100"/>
      <g class="num">
        <text x="680" y="288">1</text><text x="786" y="288">2</text><text x="883" y="288">3</text><text x="944" y="288">5</text><text x="957" y="288">5</text><text x="1102" y="288">7</text><text x="1225" y="288">8</text><text x="1303" y="288">9</text><text x="1331" y="288">10</text><text x="1360" y="288">11</text><text x="1438" y="288">12</text><text x="1560" y="288">13</text>
        <text x="1332" y="328">40400</text>
        <text x="733" y="376">3300</text><text x="835" y="376">3000</text><text x="913" y="376">1900</text><text x="951" y="376">400</text><text x="1030" y="376">4500</text><text x="1164" y="376">3800</text><text x="1264" y="376">2400</text><text x="1317" y="376">900</text><text x="1346" y="376">900</text><text x="1399" y="376">2400</text><text x="1499" y="376">3800</text>
        <text x="733" y="921">3300</text><text x="848" y="921">3800</text><text x="957" y="921">3000</text><text x="1054" y="921">3000</text><text x="1164" y="921">3800</text><text x="1278" y="921">3300</text><text x="1385" y="921">3300</text><text x="1499" y="921">3800</text><text x="1610" y="921">3000</text>
        <text x="1332" y="970">40400</text>
        <text x="680" y="1009">1</text><text x="786" y="1009">2</text><text x="909" y="1009">4</text><text x="1006" y="1009">6</text><text x="1102" y="1009">7</text><text x="1225" y="1009">8</text><text x="1331" y="1009">10</text><text x="1438" y="1009">12</text><text x="1560" y="1009">13</text>
        <text x="617" y="449">J</text><text x="617" y="487">H</text><text x="617" y="536">G</text><text x="617" y="584">F</text><text x="617" y="607">E</text><text x="617" y="656">D</text><text x="617" y="713">C</text><text x="617" y="826">B</text><text x="617" y="849">A</text>
        <text x="1612" y="536">G</text><text x="1612" y="584">F</text><text x="1612" y="607">E</text><text x="1612" y="713">C</text><text x="1612" y="826">B</text><text x="1612" y="849">A</text>
        <text transform="translate(616 459) rotate(-90)">1200</text><text transform="translate(616 503) rotate(-90)">1500</text><text transform="translate(616 551) rotate(-90)">1500</text><text transform="translate(616 587) rotate(-90)">700</text><text transform="translate(616 622) rotate(-90)">1500</text><text transform="translate(616 675) rotate(-90)">1800</text><text transform="translate(616 761) rotate(-90)">3500</text><text transform="translate(616 829) rotate(-90)">700</text>
        <text transform="translate(635 560) rotate(-90)">250</text><text transform="translate(635 563) rotate(-90)">950</text><text transform="translate(635 720) rotate(-90)">1000</text>
      </g>
      <path stroke="#fff" stroke-width="2" d="M1415 851H1439M1427 839V863"/>
      <path stroke="#00e61a" stroke-width="5" d="M666 960V940"/><path fill="#00f01a" d="M666 928l7 14h-14z"/>
      <path stroke="#e60000" stroke-width="5" d="M672 965H692"/><path fill="#f00000" d="M705 965l-15 6v-12z"/>
      <circle cx="666" cy="965" r="7" fill="#0000c8"/>
      <text class="ax" fill="#00e61a" x="666" y="926">Y</text><text class="ax" fill="#f00000" x="713" y="973">X</text>
    </svg>
    <div class="hint"><svg viewBox="0 0 22 22"><path d="M1 20l8-8M3 12h6v6M21 1l-8 8M13 3v6h6"/></svg>按鼠标左键指定第一个角点，或拾取构件图元</div>
    <div class="views">
      <button aria-label="动态观察"><svg viewBox="0 0 28 28"><circle cx="14" cy="14" r="12"/><path class="b" d="M22 3c5-2 7 4 0 11S4 27 1 23s0-6 3-8"/></svg></button>
      <button aria-label="三维"><svg viewBox="0 0 28 28"><path d="M1 8l6-6h20l-6 6zM1 8v17a2 2 0 0 0 2 2h18V8M27 2v19l-6 6"/><text class="d3" x="3" y="23">3D</text></svg></button>
      <button aria-label="俯视"><svg viewBox="0 0 28 28"><path d="M1 8v17a2 2 0 0 0 2 2h18V8M27 2v19l-6 6"/><path class="bl" d="M1 8l6-6h20l-6 6z"/></svg><i class="tri"></i></button>
      <button aria-label="实体"><svg viewBox="0 0 28 28"><path class="bl" d="M1 8l6-6h20v19l-6 6H1z"/><path class="b" d="M1 8h20v19M21 8l6-6"/></svg><i class="tri"></i></button>
      <button aria-label="全屏"><svg viewBox="0 0 28 28"><path d="M1 9V1h9M18 1h9v8M27 19v8h-9M10 27H1v-8"/></svg></button>
      <button aria-label="选中全屏" class="rule"><svg viewBox="0 0 28 28"><rect x="1" y="1" width="26" height="26" rx="2" stroke-dasharray="4 2"/><path class="b" d="M14 6l7 4v8l-7 4-7-4v-8zM7 10l7 4 7-4M14 14v8"/></svg></button>
      <button aria-label="显示设置"><svg viewBox="0 0 28 28"><path d="M14 27H3a2 2 0 0 1-2-2V1h24a2 2 0 0 1 2 2v14M6 8h6M14 8h7M6 13h3M11 13h8M6 19h5"/><path class="bl" d="M15 23c3-5 9-5 12 0-3 5-9 5-12 0z"/><circle class="bf" cx="21" cy="23" r="1"/></svg></button>
    </div>
  </section>
  <div class="split right"></div>

  <aside class="panel disp">
    <div class="strip"><button aria-label="关闭">×</button></div>
    <h2>显示设置</h2>
    <div class="dtabs"><button class="on">图元显示</button><button>楼层显示</button></div>
    <div class="dbody">
      <table>
        <colgroup><col><col class="d2"><col class="d3c"></colgroup>
        <tr><th>图层构件</th><th>显示图元</th><th>显示名称</th></tr>
        <tr class="l0"><td><button class="exp" aria-label="折叠">−</button>所有构件</td><td><input type="checkbox" class="mix" aria-label="显示所有构件"></td><td><input type="checkbox" aria-label="所有构件名称"></td></tr>
        <tr class="l1"><td><button class="exp" aria-label="折叠">−</button>施工段</td><td><input type="checkbox" class="mix" aria-label="显示施工段"></td><td><input type="checkbox" aria-label="施工段名称"></td></tr>
        <tr class="l2"><td>土方工程</td><td><input type="checkbox" aria-label="显示土方工程"></td><td><input type="checkbox" aria-label="土方工程名称"></td></tr>
        <tr class="l2"><td>基础工程</td><td><input type="checkbox" aria-label="显示基础工程"></td><td><input type="checkbox" aria-label="基础工程名称"></td></tr>
        <tr class="l2"><td>主体结构</td><td><input type="checkbox" checked aria-label="显示主体结构"></td><td><input type="checkbox" aria-label="主体结构名称"></td></tr>
        <tr class="l2"><td>二次结构</td><td><input type="checkbox" aria-label="显示二次结构"></td><td><input type="checkbox" aria-label="二次结构名称"></td></tr>
        <tr class="l2"><td>装饰装修</td><td><input type="checkbox" aria-label="显示装饰装修"></td><td><input type="checkbox" aria-label="装饰装修名称"></td></tr>
        <tr class="l2"><td>其它土建</td><td><input type="checkbox" aria-label="显示其它土建"></td><td><input type="checkbox" aria-label="其它土建名称"></td></tr>
        <tr class="l2 end"><td>钢筋工程</td><td><input type="checkbox" checked aria-label="显示钢筋工程"></td><td><input type="checkbox" aria-label="钢筋工程名称"></td></tr>
        <tr class="l1"><td><button class="exp" aria-label="折叠">−</button>轴线</td><td><input type="checkbox" checked aria-label="显示轴线"></td><td><input type="checkbox" disabled aria-label="轴线名称"></td></tr>
        <tr class="l2"><td>轴网</td><td><input type="checkbox" checked aria-label="显示轴网"></td><td><input type="checkbox" disabled aria-label="轴网名称"></td></tr>
        <tr class="l2 end"><td>辅助轴线</td><td><input type="checkbox" checked aria-label="显示辅助轴线"></td><td><input type="checkbox" disabled aria-label="辅助轴线名称"></td></tr>
        <tr class="l1"><td><button class="exp" aria-label="折叠">−</button>柱</td><td><input type="checkbox" class="mix" aria-label="显示柱类"></td><td><input type="checkbox" aria-label="柱类名称"></td></tr>
        <tr class="l2"><td>柱</td><td><input type="checkbox" checked aria-label="显示柱"></td><td><input type="checkbox" aria-label="柱名称"></td></tr>
        <tr class="l2"><td>构造柱</td><td><input type="checkbox" checked aria-label="显示构造柱"></td><td><input type="checkbox" aria-label="构造柱名称"></td></tr>
        <tr class="l2"><td>砌体柱</td><td><input type="checkbox" aria-label="显示砌体柱"></td><td><input type="checkbox" aria-label="砌体柱名称"></td></tr>
        <tr class="l2 end"><td>约束边缘非阴...</td><td><input type="checkbox" checked aria-label="显示约束边缘"></td><td><input type="checkbox" aria-label="约束边缘名称"></td></tr>
        <tr class="l1"><td><button class="exp" aria-label="折叠">−</button>墙</td><td><input type="checkbox" class="mix" aria-label="显示墙"></td><td><input type="checkbox" aria-label="墙名称"></td></tr>
        <tr class="l2"><td>剪力墙</td><td><input type="checkbox" checked aria-label="显示剪力墙"></td><td><input type="checkbox" aria-label="剪力墙名称"></td></tr>
        <tr class="l2"><td>人防门框墙</td><td><input type="checkbox" checked aria-label="显示人防门框墙"></td><td><input type="checkbox" aria-label="人防门框墙名称"></td></tr>
        <tr class="l2"><td>砌体墙</td><td><input type="checkbox" checked aria-label="显示砌体墙"></td><td><input type="checkbox" aria-label="砌体墙名称"></td></tr>
        <tr class="l2"><td>砌体加筋</td><td><input type="checkbox" aria-label="显示砌体加筋"></td><td><input type="checkbox" aria-label="砌体加筋名称"></td></tr>
        <tr class="l2"><td>保温墙</td><td><input type="checkbox" checked aria-label="显示保温墙"></td><td><input type="checkbox" aria-label="保温墙名称"></td></tr>
        <tr class="l2"><td>暗梁</td><td><input type="checkbox" aria-label="显示暗梁"></td><td><input type="checkbox" aria-label="暗梁名称"></td></tr>
      </table>
      <div class="scroll"><i></i></div>
    </div>
    <div class="foot"><button>恢复默认设置</button></div>
  </aside>
</main>

<footer class="status">
  <dl class="s1"><dt>层高:</dt><dd>3.46</dd></dl>
  <dl class="s2"><dt>标高:</dt><dd>-0.58~2.88</dd></dl>
  <dl class="s3"><dt>选中图元:</dt><dd>0</dd></dl>
  <dl class="s4"><dt>隐藏图元:</dt><dd>0</dd></dl>
  <div class="sbtns">
    <button aria-label="正交"><svg viewBox="0 0 22 22"><path d="M4 2v17h16M4 14h5v5"/></svg></button>
    <button aria-label="捕捉" class="on"><svg viewBox="0 0 22 22"><rect x="3" y="3" width="17" height="17" rx="2"/><circle class="bl" cx="4" cy="4" r="2.500"/></svg><i class="tri"></i></button>
    <button aria-label="交点"><svg viewBox="0 0 22 22"><path stroke="#999" d="M1 1l20 20M21 1L1 21"/></svg></button>
    <button aria-label="角度"><svg viewBox="0 0 22 22"><path stroke="#888" d="M18 4L2 19h19M8 8l5 5"/></svg><i class="tri"></i></button>
    <button aria-label="偏移"><svg viewBox="0 0 22 22"><path d="M5 2v9M1 6h9"/><path class="kf" d="M9 13h12v5H9z"/></svg><i class="tri"></i></button>
    <button aria-label="图层"><svg viewBox="0 0 22 22"><path class="kf" d="M5 4h10v10H5z"/><path d="M2 2h15v15H2zM20 5v7M5 20h9"/><path class="kf" d="M14 12l6 5-4 .5-2 3z"/></svg></button>
    <button aria-label="折线"><svg viewBox="0 0 22 22"><path stroke="#888" d="M2 20L6 7l14-4"/><path stroke="#888" d="M1 19h3v3H1zM19 1h3v3h-3z"/><path class="kf" d="M15 12l6 4-6 4z"/></svg></button>
  </div>
</footer>
<div class="taskbar"><i></i></div>
</body>
</html>
```

FILE: styles.css
```css
:root {
  --blue: #2f7fdb;
  --pale: #c3dcfa;
  --ink: #3c3c40;
  --line: #d6d6da;
  --strip: #e6e5e8;
  --bar: #f0f0f1;
}
* { box-sizing: border-box; }
body {
  margin: 0;
  height: 100vh;
  display: flex;
  flex-direction: column;
  overflow: hidden;
  background: #fff;
  color: var(--ink);
  font: 16px/20px "Noto Sans", "Noto Sans CJK SC", sans-serif;
}
button, input, select { font: inherit; color: inherit; margin: 0; }
button { border: 0; padding: 0; background: none; white-space: nowrap; display: flex; align-items: center; }
ul, dl, dd, h2 { margin: 0; padding: 0; list-style: none; font-weight: 400; font-size: 16px; }
a { color: inherit; text-decoration: none; }
svg { width: 22px; height: 22px; flex: none; fill: none; stroke: #5b6170; stroke-width: 1.5; }
svg text { stroke: none; }
.defs { position: absolute; width: 0; height: 0; }
.b { stroke: var(--blue); }
.bf { stroke: none; fill: var(--blue); }
.bl { stroke: var(--blue); fill: var(--pale); }
.fl { fill: var(--pale); }
.kf { stroke: none; fill: #4b5160; }
.r { stroke: #d6303a; }
button:disabled { color: #b4b4b8; --blue: #b8b8bc; --pale: #fff; }
button:disabled svg { stroke: #b8b8bc; }
.tri { flex: none; width: 0; height: 0; border: 4px solid transparent; border-top: 5px solid #6a6a70; border-bottom: 0; margin-left: 5px; }

/* title and menus */
.top { display: flex; height: 52px; flex: none; border-bottom: 1px solid #ececee; }
.logo { width: 63px; flex: none; }
.logo svg { width: 60px; height: 52px; stroke: none; }
.top-main { flex: 1; min-width: 0; }
.titlebar { display: flex; height: 24px; align-items: center; }
.quick { display: flex; gap: 12px; padding-left: 6px; flex: none; }
.quick .tri { margin-left: 2px; }
.quick .more { margin: 0 3px 0 0; }
.doc-title { position: relative; white-space: nowrap; flex: 1; }
.new { position: absolute; left: 222px; top: 8px; background: #d6262c; color: #fff; font: bold 13px/15px "Noto Sans", sans-serif; padding: 0 2px; }
.winbtns { display: flex; gap: 31px; padding-right: 16px; }
.winbtns svg { width: 16px; height: 16px; }
.menurow { display: flex; height: 28px; align-items: center; justify-content: space-between; }
.menu { display: flex; }
.menu a { padding: 0 17px; line-height: 26px; }
.menu .on { background: #1a86f0; color: #fff; border-radius: 13px; padding: 0 16px; }
.help { display: flex; align-items: center; gap: 9px; padding-right: 6px; position: relative; }
.help button svg { width: 21px; height: 21px; }
.q { font-size: 22px; }
.q .tri { margin-left: 2px; border-width: 3px; }
.ask { display: flex; align-items: center; width: 416px; height: 22px; border: 1px solid #e2e2e6; border-radius: 3px; margin-right: 4px; }
.ask input { flex: 1; min-width: 0; border: 0; padding: 0; outline: 0; color: #222; background: none; text-indent: -8px; }
.ask svg { margin-right: 4px; stroke: #bbb; }
.tip { position: absolute; right: 587px; top: -10px; width: 255px; height: 43px; background: #128af8; color: #fff; border-radius: 4px; display: flex; align-items: center; justify-content: space-between; padding: 0 18px 0 9px; z-index: 3; }
.tip::after { content: ""; position: absolute; left: 100%; top: 14px; border: 8px solid transparent; border-left-color: #128af8; border-right: 0; }
.help .tip button { background: #3c9ffa; height: 22px; padding: 0 7px; border-radius: 2px; }

/* ribbon */
.ribbon { position: relative; display: flex; flex: none; height: 129px; padding: 4px 0 6px; border-bottom: 1px solid #d2d2d4; }
.grp { border-right: 1px solid #dedee2; display: flex; flex-direction: column; flex: none; }
.tools { display: grid; grid-template-rows: 30px 30px 30px; align-items: center; flex: 1; align-content: start; }
.tools button { gap: 4px; }
.tools .tri { margin-left: 3px; }
.cap { display: flex; justify-content: center; align-items: center; line-height: 24px; }
.tools .big { grid-row: 1 / 4; flex-direction: column; justify-content: flex-start; align-self: stretch; gap: 6px; padding-top: 3px; }
.g1 { width: 303px; } .g1 .tools { grid-template-columns: 57px 128px 1fr; padding-left: 9px; }
.g1 .big { width: 52px; height: 87px; background: #c2d8f1; border-radius: 4px; margin-top: 3px; }
.g1 .big svg { width: 28px; height: 38px; }
.g1 .tools button:nth-child(6) { grid-column: 2; }
.g2 { width: 252px; } .g2 .tools { grid-template-columns: 103px 1fr; padding-left: 8px; }
.g3 { width: 357px; } .g3 .tools { grid-template-columns: 87px 145px 1fr; padding-left: 7px; }
.g4 { width: 309px; } .g4 .tools { grid-template-columns: 70px 71px 82px 1fr; padding-left: 9px; }
.g5 { width: 87px; } .g5 .tools { grid-template-columns: 41px 1fr; padding-left: 10px; }
.g5 .tri { margin-left: 0; }
.g6 { width: 117px; } .g6 .tools { padding-left: 12px; }
.g6 .big svg { width: 40px; height: 40px; margin-top: 4px; }
.g6 .tools { justify-content: start; }
.g7 { width: 102px; } .g7 .tools { padding-left: 9px; justify-content: start; }
.g7 .big svg { width: 40px; height: 44px; }
.g7 .big .tri { margin: 4px 0 0; }
.g8 { width: 409px; } .g8 .tools { grid-template-columns: 112px 132px 1fr; padding-left: 10px; }
.recorder { position: absolute; right: 17px; top: 104px; width: 55px; height: 62px; background: #fff; box-shadow: 0 1px 6px #0005; z-index: 5; }
.rec-head { display: flex; justify-content: space-between; height: 34px; line-height: 34px; padding: 3px 1px 4px 5px; color: #999; align-items: center; }
.rec-head i { width: 26px; height: 27px; background: #e4e4e6; }
.recorder button { width: 53px; height: 27px; margin-left: 1px; border: 2px solid #1c72b8; background: #e3e3e5; color: #000; font-size: 13px; justify-content: center; }

.selectors { display: flex; gap: 6px; background: #f0f0f1; padding: 2px 3px 4px; height: 34px; flex: none; }
select { appearance: none; width: 127px; border: 0; border-radius: 4px; padding: 0 3px; background: #fff url("data:image/svg+xml,%3Csvg xmlns='http://www.w3.org/2000/svg' width='8' height='6'%3E%3Cpath fill='%23555' d='M0 0h8L4 6z'/%3E%3C/svg%3E") no-repeat right 6px center; }

/* panels */
.work { flex: 1; min-height: 0; display: flex; background: #fafafb; }
.panel { display: flex; flex-direction: column; border: 1px solid var(--line); border-top: 0; background: #fff; min-height: 0; }
.strip { height: 15px; background: var(--strip); display: flex; justify-content: flex-end; flex: none; }
.strip button { color: #999; font-size: 20px; padding-right: 4px; line-height: 15px; }
h2 { height: 29px; line-height: 28px; background: var(--bar); color: #7a7a80; padding-left: 10px; border-bottom: 1px solid var(--line); flex: none; }
.scroll { width: 16px; flex: none; display: flex; flex-direction: column; align-items: center; }
.scroll i { width: 10px; background: #cbcacd; border-radius: 5px; }
.nav { width: 169px; flex: none; border-left: 0; margin-bottom: 1px; }
.navtools { display: flex; gap: 6px; height: 36px; align-items: center; border-bottom: 1px solid var(--line); padding-left: 1px; flex: none; }
.navtools button { width: 31px; height: 29px; justify-content: center; border-radius: 4px; }
.navtools button:first-child svg { width: 18px; height: 18px; }
.navtools .on { background: #cadef7; }
.navbody { flex: 1; min-height: 0; display: flex; padding: 5px 1px 4px 0; }
.navbody ul { width: 150px; display: flex; flex-direction: column; gap: 4px; }
.navbody li { position: relative; flex: 1; background: #eeeef0; padding-left: 3px; display: flex; align-items: center; white-space: nowrap; }
.navbody li.sub { background: none; padding-left: 21px; gap: 17px; }
.navbody li.on { background: #d4e5fb; }
.navbody li svg { width: 26px; height: 24px; }
.navbody .dot { position: absolute; left: 51px; top: 2px; width: 8px; height: 8px; border-radius: 50%; background: #d4141c; }
.nav .scroll i { margin-top: 131px; height: 579px; }

.mid { width: 421px; flex: none; margin: 0 0 1px 6px; display: flex; flex-direction: column; gap: 6px; }
.comps { height: 327px; flex: none; }
.props { flex: 1; }
.tabs { display: flex; height: 30px; flex: none; background: var(--bar); border-bottom: 1px solid var(--line); }
.tabs button { width: 85px; justify-content: center; color: #828288; background: #e3e3e5; border: 1px solid var(--line); border-width: 0 1px 0 0; }
.tabs .on { background: #f6f6f7; color: #333; font-weight: 600; }
.ctools { display: flex; height: 36px; align-items: center; gap: 14px; padding-left: 4px; border-bottom: 1px solid #ececee; flex: none; }
.ctools button { gap: 4px; }
.ctools .tri { margin-left: 6px; border-width: 3px; border-top-width: 4px; }
.ctools .last { margin: 0 3px 0 auto; }
.ctools .last svg { width: 12px; height: 12px; }
.csearch { display: flex; height: 25px; align-items: center; border-bottom: 1px solid var(--line); flex: none; padding: 0 6px 0 2px; }
.csearch input { flex: 1; border: 0; outline: 0; padding: 0; }
.csearch input::placeholder { color: #8c8c90; opacity: 1; }
.csearch svg { width: 20px; height: 20px; stroke: #aaa; }
.clist { flex: 1; display: flex; justify-content: space-between; padding-right: 2px; }
.clist ul { padding: 6px 0 0 52px; display: grid; grid-auto-rows: 27px; gap: 4px; align-content: start; }
.clist li { width: 137px; padding-left: 4px; line-height: 27px; border-radius: 3px; word-spacing: normal; }
.clist .on { background: #c2d8f1; }
.comps .scroll i { margin-top: 68px; height: 135px; }

table { border-collapse: collapse; table-layout: fixed; height: 100%; }
th, td { border: 1px solid var(--line); padding: 0 0 0 4px; font-weight: 400; white-space: nowrap; line-height: 20px; overflow: hidden; }
.pbody { flex: 1; min-height: 0; display: flex; padding-right: 2px; justify-content: space-between; }
.pbody table { width: 401px; margin: -1px 0 0 -1px; }
.pbody tr:last-child > * { border-bottom: 0; }
.pbody th { padding: 0; }
.pbody th:first-child { background: #eeeef0; }
.pbody tr:first-child th:first-child { background: #fff; }
.c1 { width: 29px; } .c2 { width: 131px; } .c3 { width: 187px; } .c4 { width: 54px; }
.l { color: #2b5fdc; }
td:last-child { padding: 0; text-align: center; }
.props .scroll i { margin-top: 19px; height: 349px; }
input[type=checkbox] { appearance: none; width: 18px; height: 18px; border: 1px solid #8a8a90; border-radius: 3px; background: #fff; vertical-align: middle; position: relative; }
input[type=checkbox]:checked { background: #2d7bdb; border-color: #2d7bdb; }
input[type=checkbox]:checked::after { content: ""; position: absolute; left: 5px; top: 1px; width: 6px; height: 11px; border: solid #fff; border-width: 0 2px 2px 0; transform: rotate(42deg); }
input[type=checkbox]:disabled { background: #eeeef0; border-color: #b4b4b8; }
input.mix::after { content: ""; position: absolute; inset: 2px; background: #8dc3fa; border: 1px solid #4e95e4; }
.exp { display: inline-flex; width: 17px; height: 17px; border: 1px solid #8a8a90; border-radius: 3px; align-items: center; justify-content: center; line-height: 14px; font-size: 14px; background: #fff; vertical-align: middle; margin-right: 8px; }

/* drawing area */
.split { width: 5px; flex: none; margin: 343px 0 342px; background: #5f6672; }
.canvas { position: relative; flex: 1; min-width: 0; background: #000; overflow: hidden; margin-bottom: 1px; }
.plan { display: block; width: 100%; height: 100%; stroke: none; stroke-width: 1; }
.slab { fill: #666; }
.grid { stroke: #0c7412; stroke-width: 2; stroke-opacity: .8; }
.grid use { stroke: #0c8a14; stroke-width: 1; stroke-opacity: 1; }
.olive { stroke: #5cb824; stroke-width: 6; }
.olive-core { stroke: #7c8a18; stroke-width: 2; }
.pink { stroke: #b87474; stroke-width: 6; }
.lime { stroke: #3bd032; stroke-width: 5; }
.gray { stroke: #929292; stroke-width: 6; }
.red { stroke: #e61010; stroke-opacity: .7; stroke-width: 2; }
.core { stroke: #d81818; stroke-opacity: .55; stroke-width: 2; }
.dred { stroke: #8e0808; stroke-opacity: .65; stroke-width: 2; }
.purple { stroke: #a800b0; stroke-width: 6; }
.violet { stroke: #8008e0; stroke-width: 6; }
.num text { fill: #f2f2f2; font: 24px "Noto Sans CJK SC", sans-serif; text-anchor: middle; }
.ax { font: 20px "Noto Sans", sans-serif; text-anchor: middle; }
.hint { position: absolute; inset: auto 0 0; height: 34px; padding-right: 6px; background: #2d2b2ebf; color: #fff; font-weight: 500; display: flex; align-items: center; justify-content: center; gap: 4px; }
.hint svg { stroke: #fff; }
.views { position: absolute; top: 0; right: 0; width: 43px; height: 319px; background: #fff; display: flex; flex-direction: column; align-items: center; padding-top: 17px; gap: 10px; }
.views button { flex-direction: column; }
.views svg { width: 27px; height: 27px; }
.views .tri { margin: 7px 0 1px; }
.views .rule { width: 32px; border-bottom: 1px solid #999; padding-bottom: 8px; margin-bottom: -2px; }
.d3 { font: bold 11px "Noto Sans", sans-serif; fill: var(--blue); }

/* display settings */
.disp { width: 363px; flex: none; margin-bottom: 1px; border-right: 0; }
.dtabs { display: flex; gap: 5px; height: 35px; align-items: flex-end; padding: 4px 0 0 3px; border-bottom: 1px solid var(--line); flex: none; }
.dtabs button { width: 78px; height: 28px; justify-content: center; background: #dfdfe1; border-radius: 3px 3px 0 0; color: #666; }
.dtabs .on { width: 80px; height: 31px; background: #fff; border: 1px solid var(--line); border-bottom-color: #fff; margin-bottom: -1px; color: var(--blue); }
.dbody { flex: 1; min-height: 0; display: flex; margin: 3px 3px 0; border: 1px solid var(--line); }
.dbody table { flex: 1; margin: -1px 0 0; }
.dbody tr > :first-child { border-left-color: #e9e9ec; }
.dbody th { padding: 0; }
.d2, .d3c { width: 82px; }
.dbody .scroll { width: 20px; }
.dbody .scroll i { margin-top: 18px; height: 113px; }
.dbody td:nth-child(2) { padding: 0; text-align: center; }
.l0 td:first-child { padding-left: 2px; }
.l1 td:first-child { padding-left: 15px; background: linear-gradient(#e2e2e6, #e2e2e6) 10px 0 / 1px 100% no-repeat; }
.l2 td:first-child { padding-left: 52px; background: linear-gradient(#e2e2e6, #e2e2e6) 10px 0 / 1px 100% no-repeat, linear-gradient(#e2e2e6, #e2e2e6) 23px 0 / 1px 100% no-repeat, linear-gradient(#e2e2e6, #e2e2e6) 23px 50% / 21px 1px no-repeat; }
.l2.end td:first-child { background-size: 1px 100%, 1px 50%, 21px 1px; }
.foot { height: 49px; flex: none; display: flex; justify-content: flex-end; align-items: center; padding-right: 11px; }
.foot button { width: 117px; height: 33px; border: 1px solid #cfcfd3; border-radius: 4px; justify-content: center; }

/* status bar */
.status { display: flex; height: 40px; flex: none; align-items: center; background: #fcfcfe; padding: 0 0 2px 2px; }
dl { display: flex; gap: 14px; flex: none; }
.s1 { width: 116px; } .s2 { width: 183px; gap: 17px; } .s3 { width: 142px; gap: 10px; } .s4 { width: 143px; gap: 10px; }
.sbtns { display: flex; gap: 5px; }
.sbtns button { min-width: 32px; height: 32px; padding: 0 4px; border: 1px solid #9a9aa0; border-radius: 3px; gap: 2px; }
.sbtns .on { background: #d3e5fb; border-color: #6ba4e2; }
.sbtns button:nth-child(3) { margin: 0 1px 0 3px; }
.taskbar { height: 10px; flex: none; background: #e6eaf3; display: flex; }
.taskbar i { width: 1383px; background: #1f3342; }
```
